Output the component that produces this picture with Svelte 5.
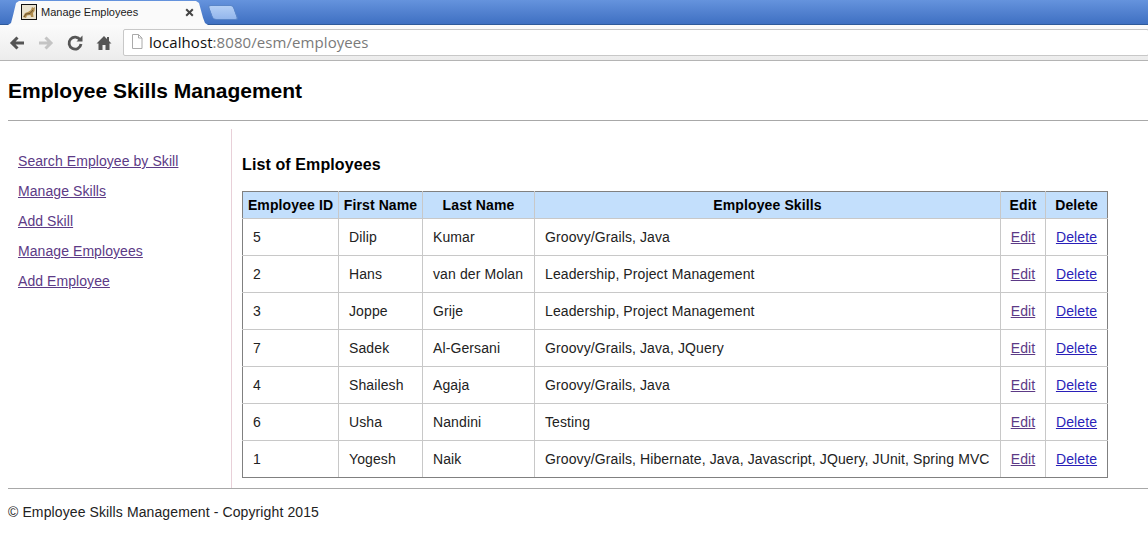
<script>
  const nav = [
    'Search Employee by Skill',
    'Manage Skills',
    'Add Skill',
    'Manage Employees',
    'Add Employee'
  ];
  const employees = [
    { id: 5, first: 'Dilip', last: 'Kumar', skills: 'Groovy/Grails, Java' },
    { id: 2, first: 'Hans', last: 'van der Molan', skills: 'Leadership, Project Management' },
    { id: 3, first: 'Joppe', last: 'Grije', skills: 'Leadership, Project Management' },
    { id: 7, first: 'Sadek', last: 'Al-Gersani', skills: 'Groovy/Grails, Java, JQuery' },
    { id: 4, first: 'Shailesh', last: 'Agaja', skills: 'Groovy/Grails, Java' },
    { id: 6, first: 'Usha', last: 'Nandini', skills: 'Testing' },
    { id: 1, first: 'Yogesh', last: 'Naik', skills: 'Groovy/Grails, Hibernate, Java, Javascript, JQuery, JUnit, Spring MVC' }
  ];
</script>

<div class="browser">
  <div class="tabstrip">
    <div class="tab">
      <svg class="favicon" width="16" height="16" viewBox="0 0 16 16" aria-hidden="true">
        <rect x="0.5" y="0.5" width="15" height="15" fill="#e9e2cf" stroke="#111" />
        <path d="M2 13 L4 9 L7 8 L10 6 L11 3 L12.5 4 L14 3 L13.5 7 L12 9 L12.5 13 L10 13 L9.5 11 L6 11.5 L5 14 Z" fill="#b08d4e" />
        <path d="M3 13 L5 10 L9 9.5 L12 6" fill="none" stroke="#6b5330" stroke-width="1" />
      </svg>
      <span class="tab-title">Manage Employees</span>
      <svg class="tab-close" width="9" height="9" viewBox="0 0 9 9" aria-hidden="true">
        <path d="M1.2 1.2 L7.8 7.8 M7.8 1.2 L1.2 7.8" stroke="#444" stroke-width="2" />
      </svg>
    </div>
    <div class="newtab"></div>
  </div>
  <div class="toolbar">
    <svg class="tool" width="18" height="18" viewBox="0 0 18 18" aria-hidden="true">
      <path d="M16 9 H5 M9.5 3.5 L4 9 L9.5 14.5" fill="none" stroke="#555" stroke-width="3" />
    </svg>
    <svg class="tool" width="18" height="18" viewBox="0 0 18 18" aria-hidden="true">
      <path d="M2 9 H13 M8.5 3.5 L14 9 L8.5 14.5" fill="none" stroke="#c4c4c4" stroke-width="3" />
    </svg>
    <svg class="tool" width="18" height="18" viewBox="0 0 18 18" aria-hidden="true">
      <path d="M14.2 6 A6 6 0 1 0 15 10" fill="none" stroke="#555" stroke-width="2.8" />
      <path d="M10.5 7.5 H16.5 V1.5 Z" fill="#555" />
    </svg>
    <svg class="tool" width="18" height="18" viewBox="0 0 18 18" aria-hidden="true">
      <path d="M9 2 L1.5 9.5 L3.5 9.5 V16 H7.5 V11 H10.5 V16 H14.5 V9.5 H16.5 L14 7 V3 H12 V5 Z" fill="#555" />
    </svg>
    <div class="omnibox">
      <svg width="12" height="15" viewBox="0 0 12 15" aria-hidden="true">
        <path d="M1.5 0.5 H7.5 L11 4 V14.5 H1.5 Z M7.5 0.5 V4 H11" fill="#fff" stroke="#aaa" />
      </svg>
      <span class="url"><span class="host">localhost</span>:8080/esm/employees</span>
    </div>
  </div>
</div>

<div class="page">
  <header>
    <h1>Employee Skills Management</h1>
  </header>
  <div class="main">
    <nav>
      {#each nav as item}
        <a href="#top">{item}</a>
      {/each}
    </nav>
    <section>
      <h2>List of Employees</h2>
      <table>
        <thead>
          <tr>
            <th class="c-id">Employee ID</th>
            <th class="c-first">First Name</th>
            <th class="c-last">Last Name</th>
            <th class="c-skills">Employee Skills</th>
            <th class="c-edit">Edit</th>
            <th class="c-delete">Delete</th>
          </tr>
        </thead>
        <tbody>
          {#each employees as e (e.id)}
            <tr>
              <td>{e.id}</td>
              <td>{e.first}</td>
              <td>{e.last}</td>
              <td>{e.skills}</td>
              <td class="action"><a class="visited" href="#top">Edit</a></td>
              <td class="action"><a class="fresh" href="#top">Delete</a></td>
            </tr>
          {/each}
        </tbody>
      </table>
    </section>
  </div>
  <footer>© Employee Skills Management - Copyright 2015</footer>
</div>

<style>
  :global(body) {
    background: #fff;
    font-family: "Liberation Sans", Arial, sans-serif;
    color: #111;
  }
  .browser {
    height: 61px;
    box-sizing: border-box;
    border-bottom: 1px solid #b4b4b4;
    background: #f4f4f4;
  }
  .tabstrip {
    height: 25px;
    box-sizing: border-box;
    padding-left: 8px;
    display: flex;
    align-items: flex-end;
    background: linear-gradient(#6593dd, #3f70c2);
    border-bottom: 1px solid #2f5a9a;
  }
  .tab {
    width: 200px;
    height: 24px;
    margin-bottom: -1px;
    box-sizing: border-box;
    padding: 0 14px 2px 13px;
    display: flex;
    align-items: center;
    background: #fafafa;
    clip-path: polygon(0 100%, 3px 92%, 5px 60%, 8px 8%, 11px 0, 188px 0, 191px 8%, 195px 70%, 197px 92%, 200px 100%);
  }
  .favicon {
    flex: none;
  }
  .tab-title {
    margin-left: 4px;
    font-size: 11px;
    color: #222;
    flex: 1;
    white-space: nowrap;
  }
  .tab-close {
    flex: none;
  }
  .newtab {
    width: 26px;
    height: 15px;
    margin: 0 0 4px 2px;
    background: linear-gradient(#b4cff5, #93b6ec);
    border: 1px solid #5a86c8;
    border-radius: 3px 3px 3px 4px;
    transform: skewX(20deg);
    box-sizing: border-box;
  }
  .toolbar {
    height: 35px;
    box-sizing: border-box;
    padding: 4px 0 4px 8px;
    display: flex;
    align-items: center;
    gap: 11px;
    background: linear-gradient(#fbfbfb, #ececec);
  }
  .tool {
    flex: none;
  }
  .omnibox {
    flex: 1;
    height: 27px;
    margin: 0 -1px 0 -1px;
    box-sizing: border-box;
    padding: 0 0 2px 7px;
    display: flex;
    align-items: center;
    gap: 6px;
    background: #fff;
    border: 1px solid #c8c8c8;
    border-radius: 2px;
  }
  .url {
    font-family: "Open Sans", "Liberation Sans", sans-serif;
    font-size: 15px;
    letter-spacing: 0.08px;
    color: #7a7a7a;
  }
  .host {
    color: #111;
  }
  .page {
    padding: 0 0 0 8px;
    letter-spacing: 0.11px;
  }
  header {
    height: 60px;
    box-sizing: border-box;
    padding-top: 18px;
    border-bottom: 1px solid #a8a8a8;
  }
  h1 {
    margin: 0;
    font-size: 21px;
    line-height: 23px;
    font-weight: bold;
    letter-spacing: 0;
    color: #000;
  }
  .main {
    display: flex;
    margin-top: 8px;
    height: 359px;
    border-bottom: 1px solid #a8a8a8;
  }
  nav {
    width: 224px;
    flex: none;
    box-sizing: border-box;
    padding: 24px 0 0 10px;
    border-right: 1px solid #e8d0d8;
    display: flex;
    flex-direction: column;
    align-items: flex-start;
    gap: 14px;
    letter-spacing: 0.07px;
  }
  nav a {
    font-size: 14px;
    line-height: 16px;
    color: #5c3a86;
  }
  section {
    padding: 0 0 0 10px;
  }
  h2 {
    margin: 27px 0 17px;
    font-size: 16px;
    line-height: 18px;
    font-weight: bold;
    color: #000;
  }
  table {
    width: 866px;
    table-layout: fixed;
    border-collapse: collapse;
    font-size: 14px;
  }
  th {
    height: 27px;
    box-sizing: border-box;
    padding: 0;
    background: #c3dffc;
    border: 1px solid #c8c8c8;
    border-top-color: #808080;
    color: #000;
    font-weight: bold;
    text-align: center;
    white-space: nowrap;
  }
  td {
    height: 37px;
    box-sizing: border-box;
    padding: 0 0 0 10px;
    border: 1px solid #c8c8c8;
    color: #222;
    white-space: nowrap;
  }
  th:first-child,
  td:first-child {
    border-left-color: #808080;
  }
  th:last-child,
  td:last-child {
    border-right-color: #808080;
  }
  tbody tr:last-child td {
    border-bottom-color: #808080;
  }
  .c-id {
    width: 96px;
  }
  .c-first {
    width: 84px;
  }
  .c-last {
    width: 112px;
  }
  .c-skills {
    width: 466px;
  }
  .c-edit {
    width: 45px;
  }
  td.action {
    padding: 0;
    text-align: center;
  }
  .visited {
    color: #5c3a86;
  }
  .fresh {
    color: #2a1fb8;
  }
  footer {
    padding-top: 15px;
    font-size: 14px;
    line-height: 16px;
    color: #222;
  }
</style>
